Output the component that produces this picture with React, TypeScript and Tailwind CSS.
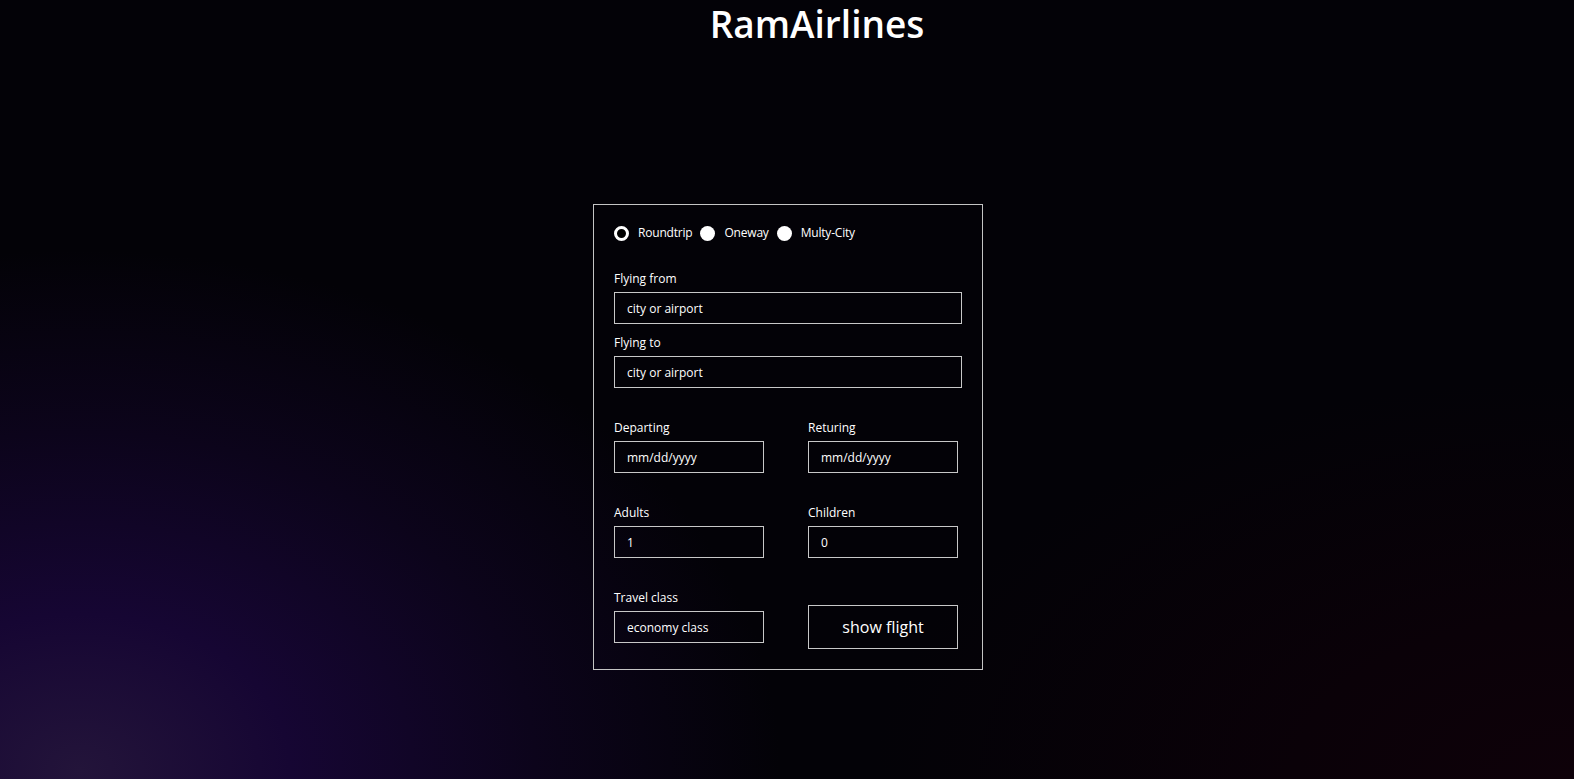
import React from 'react';

const font = { fontFamily: '"Open Sans", "Noto Sans", Arial, sans-serif' };

const Field: React.FC<{ label: string; value: string; className?: string }> = ({ label, value, className }) => (
  <div className={className}>
    <label className="block text-[12px] leading-[16px] text-white mb-[5px]">{label}</label>
    <input
      readOnly
      value={value}
      className="block w-full h-[32px] border border-[#c8c8c8] bg-transparent px-[12px] text-[12px] text-white outline-none"
    />
  </div>
);

const Radio: React.FC<{ label: string; checked?: boolean }> = ({ label, checked }) => (
  <label className="flex items-center gap-[9px] text-[12px] leading-[16px] tracking-[-0.2px] text-white">
    {checked ? (
      <span className="w-[15px] h-[15px] rounded-full border-[3.5px] border-white bg-black" />
    ) : (
      <span className="w-[15px] h-[15px] rounded-full bg-white" />
    )}
    {label}
  </label>
);

export default function App() {
  return (
    <div
      style={font}
      className="min-h-[779px] w-full bg-[#030207] bg-[image:radial-gradient(ellipse_700px_520px_at_80px_770px,#23143a_0%,#160633_30%,#0c041b_65%,transparent_100%),radial-gradient(ellipse_700px_400px_at_100%_100%,#0e0109_0%,#0a0108_40%,transparent_100%)]"
    >
      <h1 className="pl-[60px] text-center text-[37px] leading-[48px] font-semibold text-white">RamAirlines</h1>

      <div className="mt-[156px] flex justify-center pl-[2px]">
        <div className="w-[390px] border border-[#c4c4c4] px-[20px] pt-[20px] pb-[20px]">
          <div className="flex items-center gap-[8px]">
            <Radio label="Roundtrip" checked />
            <Radio label="Oneway" />
            <Radio label="Multy-City" />
          </div>

          <Field label="Flying from" value="city or airport" className="mt-[30px]" />
          <Field label="Flying to" value="city or airport" className="mt-[11px]" />

          <div className="mt-[32px] flex gap-[44px]">
            <Field label="Departing" value="mm/dd/yyyy" className="w-[150px]" />
            <Field label="Returing" value="mm/dd/yyyy" className="w-[150px]" />
          </div>

          <div className="mt-[32px] flex gap-[44px]">
            <Field label="Adults" value="1" className="w-[150px]" />
            <Field label="Children" value="0" className="w-[150px]" />
          </div>

          <div className="mt-[32px] flex items-end gap-[44px]">
            <Field label="Travel class" value="economy class" className="w-[150px] pb-[6px]" />
            <button className="h-[44px] w-[150px] border border-[#c8c8c8] bg-transparent text-[16px] text-white">
              show flight
            </button>
          </div>
        </div>
      </div>
    </div>
  );
}
